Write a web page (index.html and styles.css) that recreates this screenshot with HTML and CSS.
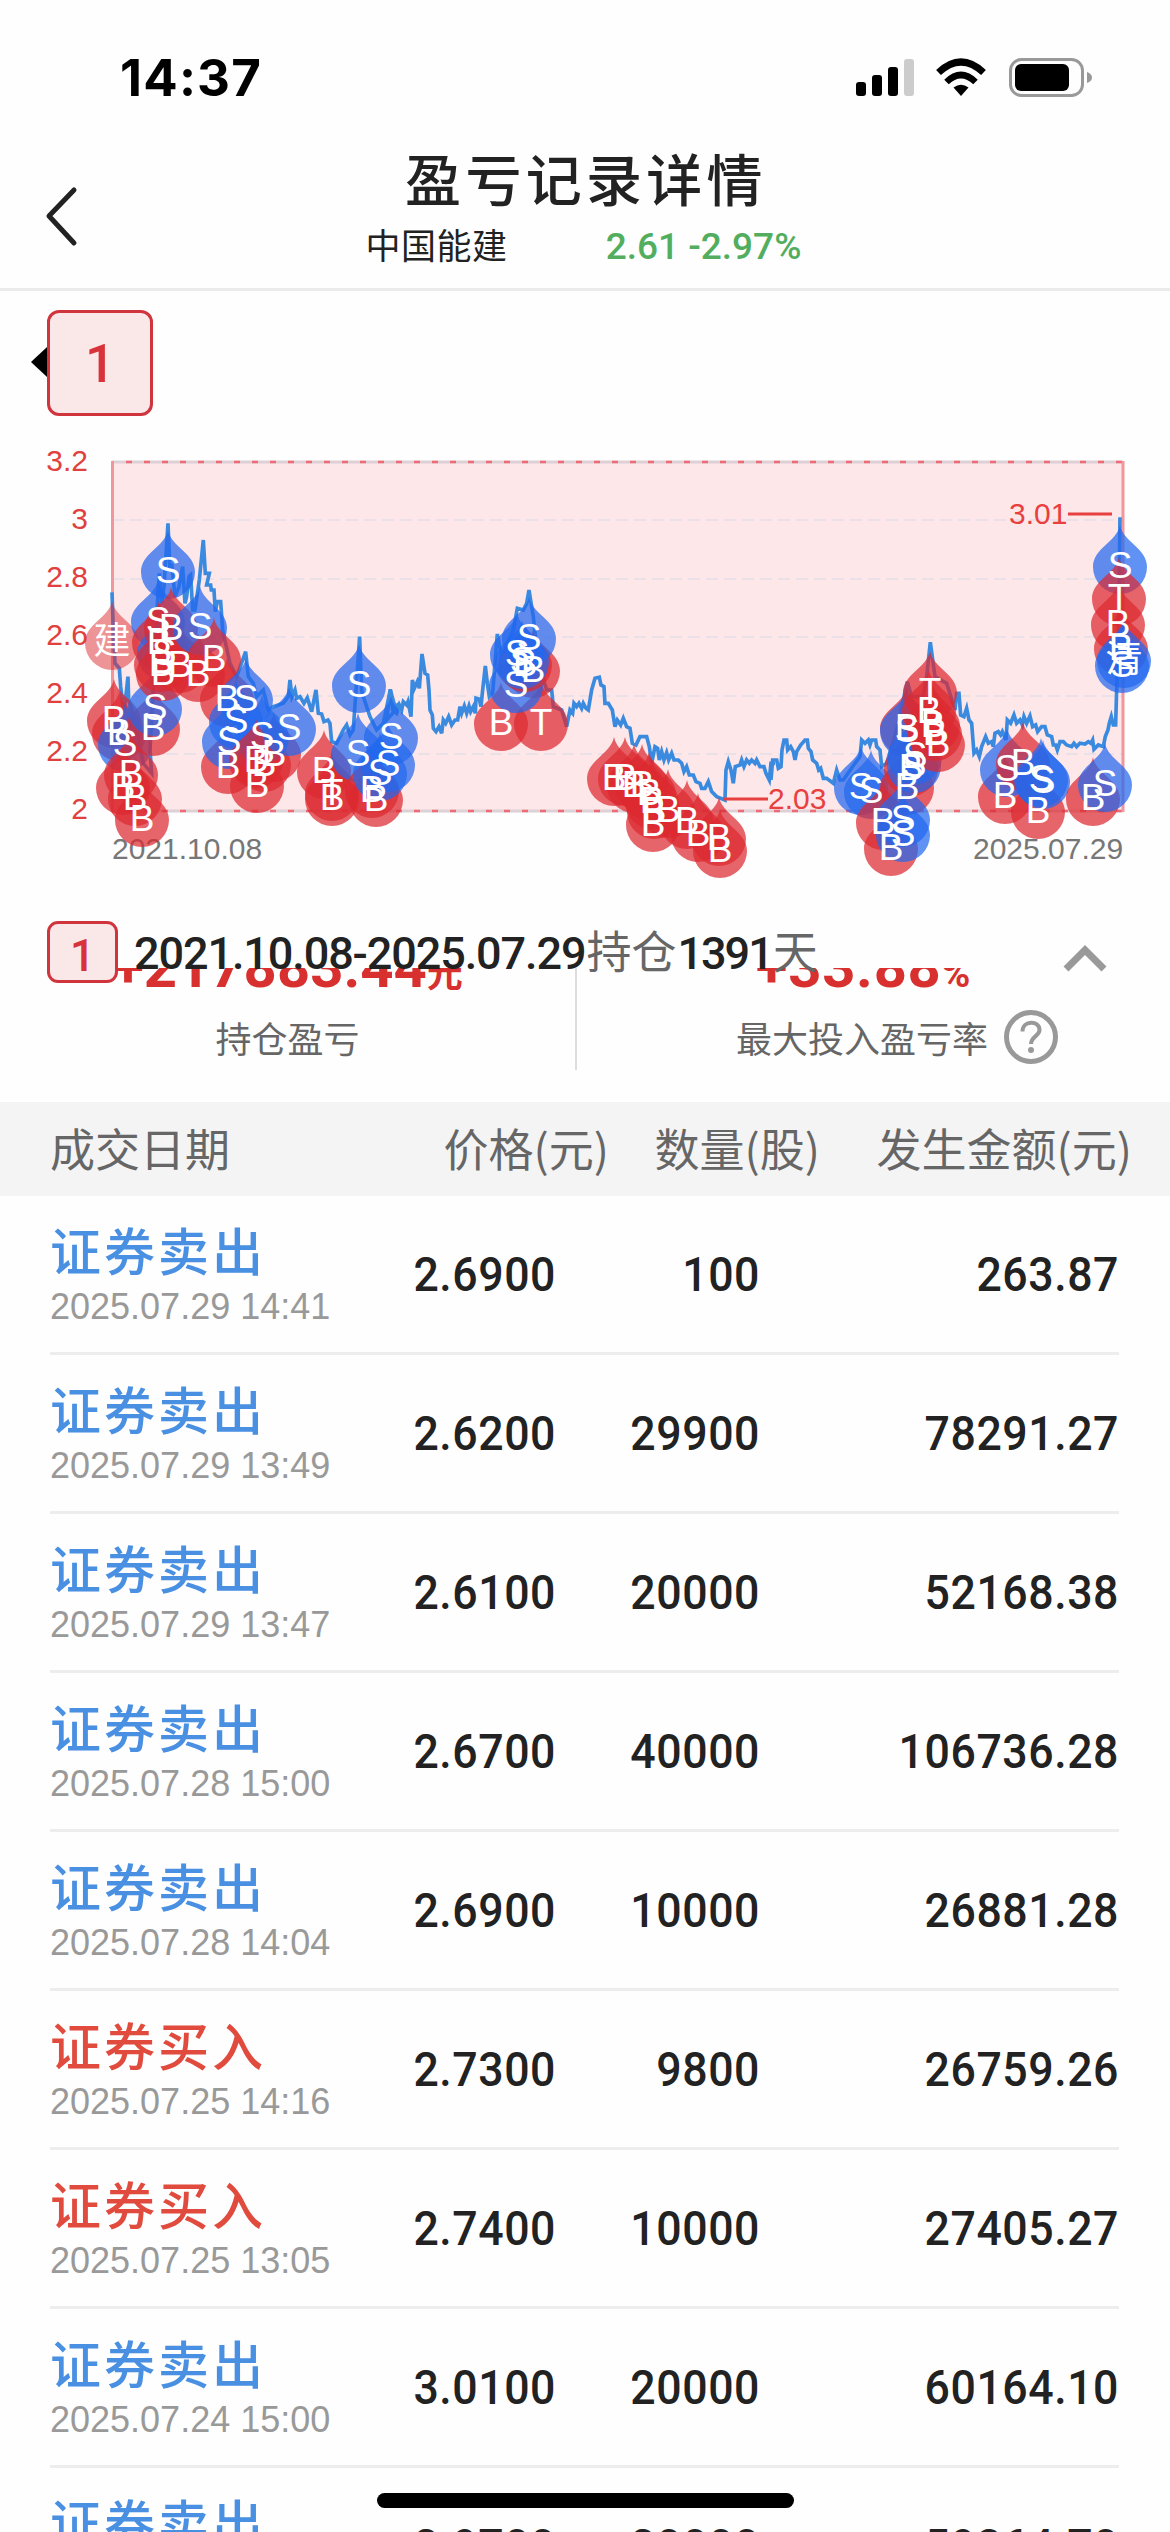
FILE: index.html
```
<!DOCTYPE html>
<html lang="zh-CN">
<head>
  <meta charset="UTF-8">
  <title>盈亏记录详情</title>
  <link rel="stylesheet" href="styles.css">
</head>
<body>
  <div class="status-bar">
    <span class="clock">14:37</span>
    <svg class="status-icons" width="240" height="44" viewBox="0 0 240 44">
      <rect x="1" y="26" width="10" height="14" rx="3"/>
      <rect x="17" y="19" width="10" height="21" rx="3"/>
      <rect x="33" y="11" width="10" height="29" rx="3"/>
      <rect x="49" y="3" width="10" height="37" rx="3" fill="#ccc"/>
      <path d="M106 40 L98.500 31.500 Q106 26 113.500 31.500 Z"/>
      <path d="M91.500 26 Q106 12 120.500 26" fill="none" stroke="#000" stroke-width="6.500"/>
      <path d="M83.500 16.500 Q106 -4.500 128.500 16.500" fill="none" stroke="#000" stroke-width="7"/>
      <rect x="155.500" y="3.500" width="72" height="36" rx="11" fill="none" stroke="#999" stroke-width="3"/>
      <rect x="160" y="8" width="54" height="27" rx="6"/>
      <path d="M232 16 Q237 18 237 21.500 Q237 25 232 27 Z" fill="#999"/>
    </svg>
  </div>

  <header class="nav">
    <svg class="back" width="40" height="64" viewBox="0 0 40 64">
      <path d="M33 6 L8 32 L33 59" fill="none" stroke="#222" stroke-width="5" stroke-linecap="round" stroke-linejoin="round"/>
    </svg>
    <div class="nav-text">
      <h1>盈亏记录详情</h1>
      <p><span class="stock">中国能建</span><span class="quote">2.61 -2.97%</span></p>
    </div>
  </header>

  <div class="tabs">
    <span class="arrow"></span>
    <span class="tab">1</span>
  </div>

  <svg class="chart" width="1170" height="460" viewBox="0 0 1170 460">
    <rect x="112" y="32" width="1011" height="349" fill="#fde7e9"/>
    <g class="grid">
      <path d="M112 90H1123"/>
      <path d="M112 149H1123"/>
      <path d="M112 207H1123"/>
      <path d="M112 266H1123"/>
      <path d="M112 324H1123"/>
    </g>
    <path class="edge" d="M112 32H1123"/>
    <path class="edge" d="M112 381H1123"/>
    <path class="edge-dash" d="M126 32H1123"/>
    <path class="edge-dash" d="M126 381H1123"/>
    <path class="side" d="M112.500 31V382"/>
    <path class="side" d="M1123 31V382"/>
    <g class="axis">
      <text x="88" y="41">3.2</text>
      <text x="88" y="99">3</text>
      <text x="88" y="157">2.8</text>
      <text x="88" y="215">2.6</text>
      <text x="88" y="273">2.4</text>
      <text x="88" y="331">2.2</text>
      <text x="88" y="389">2</text>
    </g>
    <text class="date" x="112" y="429">2021.10.08</text>
    <text class="date" x="973" y="429">2025.07.29</text>
    <g id="price"></g>
    <g class="callout">
      <path d="M1068 84H1112"/>
      <text x="1009" y="94">3.01</text>
      <path d="M723 369H768"/>
      <text x="768" y="379">2.03</text>
    </g>
    <g id="pins"></g>
    <g id="letters"></g>
  </svg>

  <section class="period">
    <span class="badge">1</span>
    <span class="range"><b>2021.10.08-2025.07.29</b><i>持仓</i><b class="days">1391</b><i>天</i></span>
    <svg class="fold" width="48" height="32" viewBox="0 0 48 32">
      <path d="M5 26 L24 7 L43 26" fill="none" stroke="#999" stroke-width="7"/>
    </svg>
  </section>

  <section class="summary">
    <div class="stat">
      <div class="value">+217883.44<small>元</small></div>
      <div class="label">持仓盈亏</div>
    </div>
    <div class="stat rate">
      <div class="value">+33.88<small>%</small></div>
      <div class="label">最大投入盈亏率
        <svg class="help" width="56" height="56" viewBox="0 0 56 56">
          <circle cx="28" cy="28" r="24.500" fill="none" stroke="#999" stroke-width="5"/>
          <path d="M19.500 22.500 C19.500 11 36.500 11 36.500 21 C36.500 27 28 27.500 28 35" fill="none" stroke="#999" stroke-width="4"/>
          <circle cx="28" cy="41" r="3" fill="#999"/>
        </svg>
      </div>
    </div>
  </section>

  <div class="grid-row head">
    <span>成交日期</span><span>价格(元)</span><span>数量(股)</span><span>发生金额(元)</span>
  </div>
  <div id="trades"></div>
  <div class="home-bar"></div>

  <script>
    // x, y of the letter, letter
    var pins = [
      [112, 211, "建"], [114, 289, "B"], [119, 302, "B"], [125, 313, "S"], [131, 343, "B"],
      [123, 356, "B"], [135, 367, "B"], [142, 388, "B"], [153, 297, "B"], [155, 277, "S"],
      [158, 190, "S"], [168, 140, "S"], [159, 211, "B"], [164, 222, "S"], [161, 233, "B"],
      [163, 242, "B"], [180, 234, "B"], [171, 197, "B"], [198, 243, "B"], [200, 196, "S"],
      [214, 228, "B"], [227, 268, "B"], [228, 335, "B"], [246, 268, "S"], [236, 290, "S"],
      [229, 310, "S"], [264, 333, "B"], [274, 323, "B"], [262, 305, "S"], [256, 329, "B"],
      [257, 354, "B"], [289, 297, "S"], [324, 340, "B"], [332, 362, "T"], [332, 367, "B"],
      [359, 254, "S"], [358, 323, "S"], [372, 359, "B"], [376, 368, "B"], [391, 306, "S"],
      [388, 333, "S"], [380, 342, "S"], [501, 292, "B"], [541, 292, "T"], [533, 239, "B"],
      [516, 254, "S"], [525, 233, "B"], [529, 207, "S"], [517, 223, "S"], [522, 230, "S"],
      [614, 347, "B"], [625, 347, "B"], [634, 354, "B"], [642, 354, "B"], [649, 362, "B"],
      [652, 370, "B"], [654, 380, "B"], [653, 393, "B"], [668, 379, "B"], [687, 390, "B"],
      [698, 403, "B"], [719, 407, "B"], [720, 419, "B"], [861, 356, "S"], [871, 360, "S"],
      [907, 297, "B"], [907, 299, "S"], [911, 337, "B"], [907, 356, "B"], [915, 325, "S"],
      [914, 334, "S"], [930, 261, "T"], [929, 280, "B"], [933, 294, "B"], [935, 302, "B"],
      [938, 313, "B"], [883, 391, "B"], [891, 417, "B"], [903, 388, "S"], [903, 403, "S"],
      [1005, 365, "B"], [1007, 338, "S"], [1023, 332, "B"], [1038, 380, "B"], [1041, 348, "S"],
      [1043, 350, "S"], [1093, 367, "B"], [1105, 353, "S"], [1120, 135, "S"], [1119, 167, "T"],
      [1118, 193, "B"], [1121, 217, "B"], [1122, 234, "S"], [1124, 229, "清"]
    ];

    // price curve in three parts, drawn at a third of their size
    var price = [
      [0, "336,487 340,600 345,700 358,715 362,770 372,850 384,740 386,810 400,850 430,1000 455,1030 450,960 460,780 466,650 470,560 478,430 485,520 492,470 504,280 510,420 515,400 525,500 537,470 548,410 555,520 560,500 567,440 572,435 578,540 585,540 598,450 610,330 616,430 628,430 620,465 632,465 634,480 642,480 646,545 652,515 662,515 668,600 690,700 710,740 737,665 745,740 760,760 770,800 790,780 805,840 820,830 850,820 865,800 870,750 876,800 885,780 890,805 900,800 912,820 922,803 935,845 948,780 955,850 965,852 972,875 984,870 990,880 995,935 1010,940 1030,900 1040,885 1050,915 1060,900 1079,620 1085,780 1090,800 1110,860 1130,900 1150,880 1171,780 1185,830 1200,820"],
      [380, "60,825 20,870 31,778 38,840 50,850 58,825 65,840 70,815 80,825 84,815 93,860 97,750 103,775 112,755 118,775 126,672 135,730 143,735 147,780 150,840 157,855 160,895 168,905 177,890 185,910 190,870 197,880 206,860 215,885 225,870 233,870 240,830 245,850 253,828 260,850 267,828 272,845 280,830 286,850 288,805 298,808 303,830 308,780 316,708 322,760 328,800 338,790 345,700 352,612 365,680 400,600 412,535 430,540 440,520 447,480 460,560 475,700 500,780 515,780 520,830 545,840 560,890 570,840 578,850 582,820 590,830 597,820 605,835 610,820 618,835 625,840 635,780 645,745 658,742 663,765 672,770 675,820 685,820 697,840 705,890 712,870 722,885 730,865 740,890 750,895 757,940 768,945 780,920 800,920 808,950 815,1000 825,950 833,955 838,990 845,965 852,990 860,968 866,990 875,970 882,990 895,990 905,1000 912,1025 920,1010 928,1035 940,1035 948,1055 960,1060 965,1075 975,1075 985,1055 995,1085 1010,1100 1035,1110 1038,1020 1045,995 1053,1020 1060,1060 1066,1010 1080,1005 1085,990 1092,1010 1100,990 1108,1000 1115,990 1125,1000 1130,990 1140,1010 1152,1010 1158,1030 1168,1050 1173,1000 1185,1000"],
      [770, "3,1050 8,990 20,990 25,1015 33,1010 36,960 42,930 50,930 53,960 62,950 70,965 75,990 80,965 92,945 105,930 112,930 115,955 123,965 128,990 140,1000 146,1020 152,1015 160,1045 170,1045 190,1060 200,1020 210,1050 220,1050 255,1000 270,980 275,930 285,940 295,930 300,945 305,930 317,930 320,950 330,960 335,1010 350,1000 380,900 412,755 425,800 460,800 470,740 481,637 495,740 530,760 555,840 560,790 567,790 572,855 582,860 590,835 597,870 605,880 612,970 620,960 628,980 635,950 647,920 655,940 665,935 670,950 675,910 685,905 692,915 697,905 708,930 712,870 722,880 732,855 740,880 750,870 757,885 762,860 770,880 780,858 788,890 797,885 803,905 815,890 825,890 832,915 845,920 850,945 857,945 862,960 870,935 880,935 890,945 905,950 912,940 920,950 930,940 945,942 955,935 963,940 968,930 972,958 985,945 1000,950 1006,920 1014,900 1018,880 1024,860 1030,885 1037,885 1040,780 1046,600 1050,262"]
    ];

    var trades = [
      ["卖出", "2025.07.29 14:41", "2.6900", "100", "263.87"],
      ["卖出", "2025.07.29 13:49", "2.6200", "29900", "78291.27"],
      ["卖出", "2025.07.29 13:47", "2.6100", "20000", "52168.38"],
      ["卖出", "2025.07.28 15:00", "2.6700", "40000", "106736.28"],
      ["卖出", "2025.07.28 14:04", "2.6900", "10000", "26881.28"],
      ["买入", "2025.07.25 14:16", "2.7300", "9800", "26759.26"],
      ["买入", "2025.07.25 13:05", "2.7400", "10000", "27405.27"],
      ["卖出", "2025.07.24 15:00", "3.0100", "20000", "60164.10"],
      ["卖出", "2025.07.24 14:56", "2.9700", "20000", "59364.70"]
    ];

    var line = "";
    price.forEach(function (p) {
      line += '<polyline transform="translate(' + p[0] + ') scale(0.3333)" points="' + p[1] + '"/>';
    });
    document.getElementById("price").innerHTML = line;

    var drops = "", letters = "";
    pins.forEach(function (p) {
      var type = p[2] === "S" || p[2] === "清" ? "sell" : p[2] === "建" ? "open" : "buy";
      drops += '<path class="' + type + '" transform="translate(' + p[0] + ' ' + (p[1] + 2) + ')" d="M0 -42 C3 -25 27 -19 27 0 A27 27 0 0 1 -27 0 C-27 -19 -3 -25 0 -42Z"/>';
      letters += '<text x="' + p[0] + '" y="' + (p[1] + 13) + '">' + p[2] + '</text>';
    });
    document.getElementById("pins").innerHTML = drops;
    document.getElementById("letters").innerHTML = letters;

    var rows = "";
    trades.forEach(function (t) {
      rows += '<div class="grid-row trade"><div><div class="side-name ' + (t[0] === "卖出" ? "is-sell" : "is-buy") + '">证券' + t[0] +
        '</div><div class="time">' + t[1] + '</div></div><span>' + t[2] + '</span><span>' + t[3] + '</span><span>' + t[4] + '</span></div>';
    });
    document.getElementById("trades").innerHTML = rows;
  </script>
</body>
</html>
```
FILE: styles.css
```
* {
  box-sizing: border-box;
}

body {
  margin: 0;
  width: 1170px;
  height: 2532px;
  overflow: hidden;
  position: relative;
  background: #fefefe;
  color: #222;
  font-family: Roboto, "Noto Sans CJK SC", sans-serif;
}

.status-bar {
  height: 140px;
  padding: 56px 75px 0 120px;
  display: flex;
  justify-content: space-between;
}

.clock {
  font: 700 51px/44px Inter, sans-serif;
  letter-spacing: 1.2px;
  color: #000;
}

.nav {
  height: 151px;
  display: flex;
  border-bottom: 3px solid #ebebeb;
}

.back {
  margin: 44px 0 0 41px;
}

.nav-text {
  flex: 1;
  padding-right: 79px;
  text-align: center;
}

.nav h1 {
  margin: 9px 0 0;
  font-size: 56px;
  line-height: 66px;
  font-weight: 500;
  letter-spacing: 4.3px;
}

.nav p {
  margin: 10px 0 0;
  padding-right: 5px;
  font-size: 35px;
  line-height: 44px;
}

.stock {
  letter-spacing: 0.5px;
  margin-right: 98px;
}

.quote {
  color: #52ae5e;
  font-size: 37px;
  font-weight: 500;
}

.tabs {
  height: 139px;
  padding: 19px 0 0 31px;
  display: flex;
}

.arrow {
  margin-top: 37px;
  height: 0;
  border: 15px solid transparent;
  border-left: 0;
  border-right: 16px solid #000;
}

.tab {
  width: 106px;
  height: 106px;
  border: 3px solid #d0343c;
  border-radius: 12px;
  background: #fae8e9;
  color: #d8333a;
  font-size: 53px;
  font-weight: 500;
  line-height: 102px;
  text-align: center;
}

.chart {
  display: block;
  font-family: "Liberation Sans", "Noto Sans CJK SC", sans-serif;
  font-size: 30px;
}

.grid path {
  stroke: #e9e0e8;
  stroke-width: 2;
  stroke-dasharray: 12 6;
}

.edge {
  stroke: #ddd0d6;
  stroke-width: 3;
}

.edge-dash {
  stroke: #ee6b76;
  stroke-width: 2.5;
  stroke-dasharray: 6 12;
}

.side {
  stroke: #f0969d;
  stroke-width: 3;
}

.axis text {
  fill: #e0413f;
  text-anchor: end;
}

.date {
  fill: #777;
}

#price {
  fill: none;
  stroke: #3a8ae0;
  stroke-width: 11;
}

.callout {
  fill: #e8403e;
}

.callout path {
  stroke: #e8403e;
  stroke-width: 3;
}

.buy {
  fill: #dc2a30;
  opacity: 0.72;
}

.sell {
  fill: #2268ee;
  opacity: 0.72;
}

.open {
  fill: #dc2a30;
  opacity: 0.5;
}

#letters {
  fill: #fff;
  font-size: 37px;
  text-anchor: middle;
}

.period {
  position: relative;
  z-index: 1;
  height: 78px;
  padding: 31px 61px 0 47px;
  display: flex;
  align-items: flex-start;
  background: #fefefe;
}

.badge {
  width: 71px;
  height: 62px;
  flex: none;
  border: 3px solid #d0343c;
  border-radius: 11px;
  background: #fae8e9;
  color: #d8333a;
  font-size: 44px;
  font-weight: 500;
  line-height: 64px;
  text-align: center;
}

.range {
  flex: 1;
  margin-left: 16px;
  font-size: 45px;
  line-height: 66px;
  white-space: nowrap;
}

.range b {
  font-weight: 500;
  letter-spacing: -1.1px;
}

.range .days {
  letter-spacing: -2px;
}

.range i {
  font-style: normal;
  color: #666;
  margin: 0 1px;
}

.fold {
  margin-top: 22px;
}

.summary {
  height: 134px;
  display: flex;
}

.stat {
  width: 575px;
  height: 102px;
  text-align: center;
}

.rate {
  width: 595px;
  border-left: 2px solid #ddd;
}

.stat .value {
  margin-top: -34px;
  height: 74px;
  line-height: 66px;
  font-size: 58px;
  font-weight: 700;
  color: #d8302f;
  white-space: nowrap;
}

.stat .value small {
  font-size: 36px;
}

.rate .value {
  padding-right: 20px;
  letter-spacing: 0.7px;
}

.rate .value small {
  font-size: 39px;
}

.stat .label {
  display: flex;
  justify-content: center;
  align-items: center;
  height: 58px;
  font-size: 36px;
  color: #666;
}

.rate .label {
  padding-left: 48px;
}

.help {
  margin-left: 15px;
}

.grid-row {
  display: grid;
  grid-template-columns: 250px 256px 204px 359px;
  padding: 0 51px 0 50px;
}

.grid-row > span {
  text-align: right;
  white-space: nowrap;
}

.head {
  height: 94px;
  background: #f4f4f4;
  color: #666;
  font: 45px/92px "Noto Sans CJK SC", sans-serif;
  grid-template-columns: 300px 259px 211px 312px;
}

.head > span:first-child {
  text-align: left;
}

.trade {
  height: 159px;
}

.trade::after {
  content: "";
  grid-column: 1 / -1;
  height: 3px;
  background: #ededed;
}

.trade > * {
  height: 156px;
}

.trade > span {
  font-size: 48px;
  font-weight: 500;
  line-height: 157px;
  letter-spacing: 0.6px;
  transform: scaleX(0.93);
  transform-origin: right;
}

.side-name {
  margin-top: 28px;
  font-size: 51px;
  line-height: 60px;
  font-weight: 500;
  letter-spacing: 3px;
}

.is-sell {
  color: #4a90e2;
}

.is-buy {
  color: #e04b3e;
}

.time {
  margin-top: 3px;
  font: 36px/40px "Liberation Sans", sans-serif;
  color: #999;
  white-space: nowrap;
}

.home-bar {
  position: absolute;
  left: 377px;
  top: 2493px;
  width: 417px;
  height: 15px;
  border-radius: 8px;
  background: #000;
}
```
